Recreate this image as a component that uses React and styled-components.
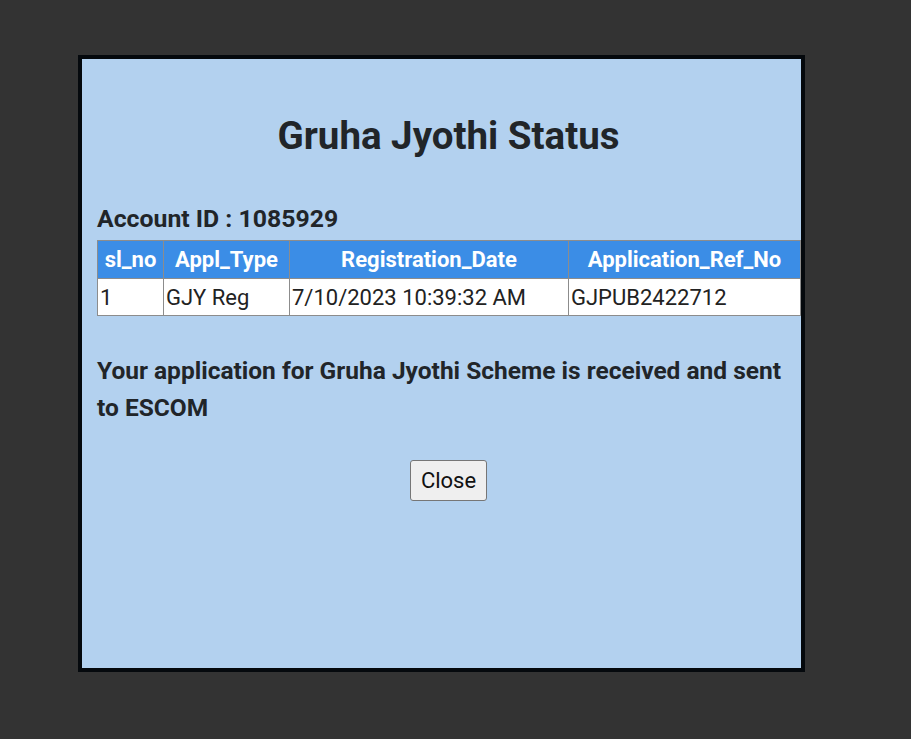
import React from 'react'
import styled, { createGlobalStyle } from 'styled-components'

const Global = createGlobalStyle`
  html, body {
    margin: 0;
    padding: 0;
    background: #333333;
  }
  body {
    font-family: Roboto, "Liberation Sans", sans-serif;
    color: #212529;
  }
`;

const Page = styled.div`
  min-height: 739px;
  padding: 55px 0 0 78px;
  box-sizing: border-box;
`;

const Modal = styled.div`
  width: 727px;
  height: 617px;
  box-sizing: border-box;
  border: 4px solid #05090d;
  background: #b3d1ef;
  padding: 0 1px 0 15px;
`;

const Title = styled.h2`
  margin: 54px 0 0;
  font-size: 38.5px;
  font-weight: 700;
  text-align: center;
  line-height: 46px;
`;

const Account = styled.div`
  margin-top: 45px;
  font-size: 24.8px;
  font-weight: 700;
  line-height: 30px;
`;

const Table = styled.table`
  border-collapse: collapse;
  width: 703px;
  table-layout: fixed;
  margin-top: 6px;
`;

const Th = styled.th`
  background: #3b8de6;
  color: #ffffff;
  font-size: 22px;
  font-weight: 700;
  height: 37px;
  padding: 0 4px;
  border: 1px solid #8c8c8c;
  text-align: center;
  white-space: nowrap;
`;

const Td = styled.td`
  background: #ffffff;
  color: #222;
  font-size: 22px;
  height: 36px;
  padding: 0 2px;
  border: 1px solid #8c8c8c;
  white-space: nowrap;
`;

const Message = styled.p`
  margin: 36px 0 0;
  font-size: 24.5px;
  font-weight: 700;
  line-height: 37px;
`;

const Actions = styled.div`
  display: flex;
  justify-content: center;
  margin-top: 34px;
`;

const Button = styled.button`
  font-family: Roboto, "Liberation Sans", sans-serif;
  font-size: 22px;
  color: #111;
  background: #efefef;
  border: 1px solid #767676;
  border-radius: 3px;
  width: 77px;
  height: 41px;
  padding: 0;
`;

const columns = [
  { key: 'sl_no', width: 66 },
  { key: 'Appl_Type', width: 126 },
  { key: 'Registration_Date', width: 279 },
  { key: 'Application_Ref_No', width: 232 },
];

const rows = [['1', 'GJY Reg', '7/10/2023 10:39:32 AM', 'GJPUB2422712']];

export default function App() {
  return (
    <Page>
      <Global />
      <Modal>
        <Title>Gruha Jyothi Status</Title>
        <Account>Account ID : 1085929</Account>
        <Table>
          <colgroup>
            {columns.map((c) => <col key={c.key} style={{ width: c.width }} />)}
          </colgroup>
          <thead>
            <tr>
              {columns.map((c) => <Th key={c.key}>{c.key}</Th>)}
            </tr>
          </thead>
          <tbody>
            {rows.map((r, i) => (
              <tr key={i}>
                {r.map((v, j) => <Td key={j}>{v}</Td>)}
              </tr>
            ))}
          </tbody>
        </Table>
        <Message>
          Your application for Gruha Jyothi Scheme is received and sent to ESCOM
        </Message>
        <Actions>
          <Button>Close</Button>
        </Actions>
      </Modal>
    </Page>
  )
}
